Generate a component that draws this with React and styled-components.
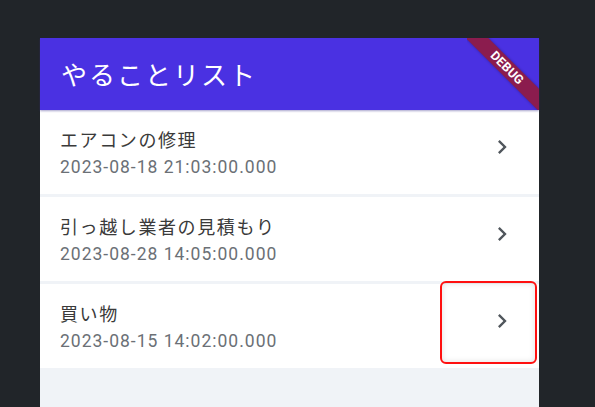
import styled, { createGlobalStyle } from "styled-components"
import { MdChevronRight } from "react-icons/md"

const GlobalStyle = createGlobalStyle`
  html, body {
    margin: 0;
    padding: 0;
    background: #212529;
    overflow: hidden;
  }
  body {
    font-family: "Roboto", "Noto Sans CJK JP", sans-serif;
  }
`

const todos = [
  { title: "エアコンの修理", date: "2023-08-18 21:03:00.000" },
  { title: "引っ越し業者の見積もり", date: "2023-08-28 14:05:00.000" },
  { title: "買い物", date: "2023-08-15 14:02:00.000" },
]

const App = () => {
  return (
    <>
      <GlobalStyle />
      <Page>
        <Device>
          <AppBar>
            <AppTitle>やることリスト</AppTitle>
            <BannerClip>
              <Banner>DEBUG</Banner>
            </BannerClip>
          </AppBar>
          <List>
            {todos.map((todo) => (
              <Row key={todo.title}>
                <TextCol>
                  <Title>{todo.title}</Title>
                  <DateText>{todo.date}</DateText>
                </TextCol>
                <Chevron>
                  <MdChevronRight size={28} />
                </Chevron>
              </Row>
            ))}
          </List>
          {/* annotation box around the last arrow */}
          <Highlight />
        </Device>
      </Page>
    </>
  )
}

const Page = styled.div`
  padding: 38px 0 0 40px;
  height: 407px;
  box-sizing: border-box;
`

const Device = styled.div`
  position: relative;
  width: 499px;
  height: 369px;
  background: #f0f3f7;
  display: flex;
  flex-direction: column;
`

const AppBar = styled.header`
  position: relative;
  height: 72px;
  flex-shrink: 0;
  background: #4a31e2;
  display: flex;
  align-items: center;
  padding-left: 21px;
  box-shadow: 0 1px 2px rgba(60, 50, 140, 0.45);
  z-index: 1;
`

const AppTitle = styled.h1`
  margin: 0;
  color: #fff;
  font-family: "Noto Sans CJK JP", sans-serif;
  font-weight: 400;
  font-size: 26px;
  letter-spacing: 2px;
  line-height: 1;
`

const BannerClip = styled.div`
  position: absolute;
  top: 0;
  right: 0;
  width: 72px;
  height: 72px;
  overflow: hidden;
`

const Banner = styled.div`
  position: absolute;
  left: -20px;
  top: 22px;
  width: 120px;
  height: 16px;
  transform: rotate(45deg);
  background: #8b1c4e;
  color: #fff;
  font-family: "Roboto", sans-serif;
  font-weight: 700;
  font-size: 12.5px;
  letter-spacing: 0.2px;
  line-height: 16px;
  text-align: center;
  box-shadow: 0 0 3px rgba(0, 0, 0, 0.3);
`

const List = styled.div`
  display: flex;
  flex-direction: column;
  gap: 3px;
`

const Row = styled.div`
  height: 84px;
  background: #fff;
  display: flex;
  align-items: flex-start;
  justify-content: space-between;
  padding: 0 23px 0 20px;
  box-sizing: border-box;
`

const TextCol = styled.div`
  display: flex;
  flex-direction: column;
  padding-top: 17px;
`

const Title = styled.div`
  font-family: "Noto Sans CJK JP", sans-serif;
  font-size: 18px;
  letter-spacing: 1.6px;
  line-height: 24px;
  color: #3a3a3a;
`

const DateText = styled.div`
  margin-top: 5px;
  font-family: "Roboto", sans-serif;
  font-size: 17.5px;
  letter-spacing: 1px;
  line-height: 22px;
  color: #6b7076;
`

const Chevron = styled.div`
  margin-top: 23px;
  width: 28px;
  height: 28px;
  color: #50565c;
  display: flex;
`

const Highlight = styled.div`
  position: absolute;
  left: 400px;
  top: 243px;
  width: 97px;
  height: 83px;
  box-sizing: border-box;
  border: 2px solid #ff1010;
  border-radius: 6px;
  box-shadow: inset 0 0 6px rgba(0, 0, 0, 0.12);
`

export default App
